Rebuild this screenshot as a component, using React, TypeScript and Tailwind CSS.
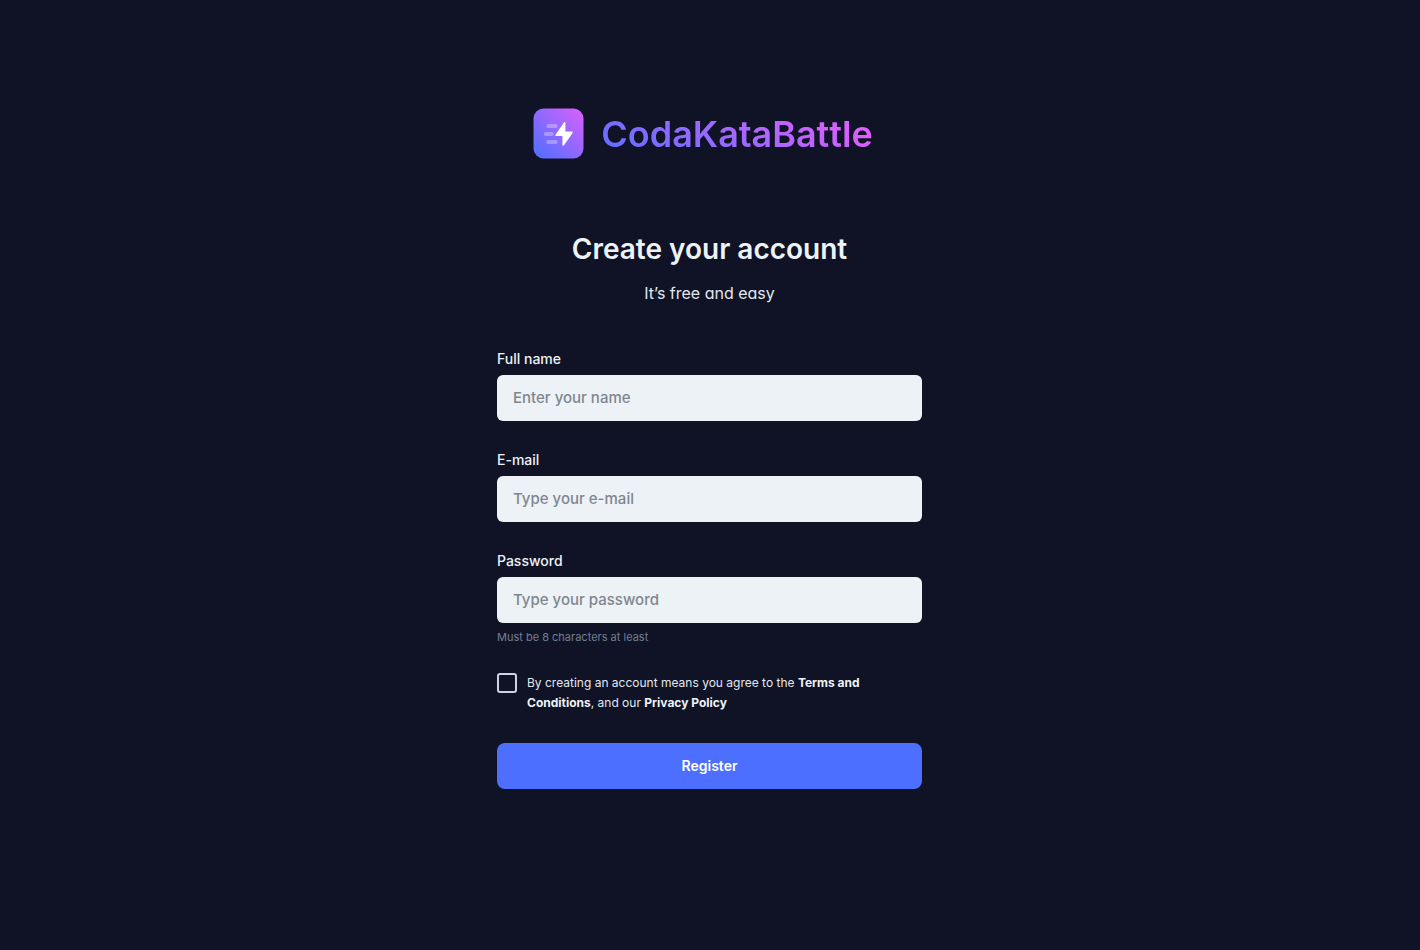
import { useId } from "react";

function LogoMark() {
  return (
    <svg width="52" height="52" viewBox="0 0 52 52" fill="none" aria-hidden="true">
      <defs>
        <linearGradient id="mark" x1="1" y1="51" x2="51" y2="1" gradientUnits="userSpaceOnUse">
          <stop stopColor="#4C6FFF" />
          <stop offset="0.5" stopColor="#9069FF" />
          <stop offset="1" stopColor="#DD5FFF" />
        </linearGradient>
      </defs>
      <rect x="1.5" y="1.5" width="50" height="50" rx="10" fill="url(#mark)" />
      <g fill="#fff" fillOpacity="0.3">
        <rect x="14.5" y="17" width="11" height="4" rx="1.6" />
        <rect x="12" y="25" width="9.5" height="4" rx="1.6" />
        <rect x="14.5" y="33" width="11" height="4" rx="1.6" />
      </g>
      <path
        d="M32 15.6 L23.4 27.8 Q22.8 29 24 29 H30.4 V38 Q30.6 39.4 31.8 38.4 L40.6 26 Q41.2 24.6 40 24.6 H33.4 V16 Q33.1 14.4 32 15.6 Z"
        fill="#fff"
      />
    </svg>
  );
}

type FieldProps = {
  label: string;
  placeholder: string;
  type: string;
  hint?: string;
};

function Field({ label, placeholder, type, hint }: FieldProps) {
  const id = useId();
  return (
    <div className="flex flex-col">
      <label htmlFor={id} className="mb-1.5 text-sm leading-5 font-medium">
        {label}
      </label>
      <input
        id={id}
        type={type}
        placeholder={placeholder}
        aria-describedby={hint ? `${id}-hint` : undefined}
        className="h-[46px] w-full rounded-md bg-[#edf2f7] px-4 pb-px text-[15px] font-medium text-[#101225] outline-none placeholder:text-[#7f868e] focus:ring-2 focus:ring-[#4c6fff]"
      />
      {hint && (
        <p id={`${id}-hint`} className="mt-1.5 text-[11px] leading-4 text-[#718096]">
          {hint}
        </p>
      )}
    </div>
  );
}

export default function App() {
  return (
    <main className="flex min-h-screen flex-col items-center bg-[#101225] pt-[107px] pr-[17px] pb-16 pl-4 font-['Inter',sans-serif] text-[#edf2f7]">
      <header className="mr-3.5 flex items-center gap-[17px]">
        <LogoMark />
        <span className="bg-linear-[30deg,#4c6fff_-10%,#9b69ff_45%,#dd5fff_85%] bg-clip-text pt-0.5 text-4xl leading-[50px] font-semibold text-transparent [font-kerning:none] [font-optical-sizing:none]">
          CodaKataBattle
        </span>
      </header>

      <h1 className="mt-[70px] text-[28px] leading-10 font-semibold">Create your account</h1>
      <p className="mt-3 text-base leading-6 text-[#e2e8f0] [font-feature-settings:'cv11']">It’s free and easy</p>

      <form className="mt-11 flex w-full max-w-[425px] flex-col" onSubmit={(e) => e.preventDefault()}>
        <div className="flex flex-col gap-[29px]">
          <Field label="Full name" placeholder="Enter your name" type="text" />
          <Field label="E-mail" placeholder="Type your e-mail" type="email" />
          <Field label="Password" placeholder="Type your password" type="password" hint="Must be 8 characters at least" />
        </div>

        <div className="mt-7 flex items-start gap-2.5">
          <input
            id="terms"
            type="checkbox"
            className="size-5 shrink-0 appearance-none rounded-[3px] border-2 border-[#cbd5e0] checked:bg-[#4c6fff]"
          />
          <label htmlFor="terms" className="max-w-[350px] text-xs leading-5 text-[#e2e8f0]">
            By creating an account means you agree to the{" "}
            <a href="#terms-and-conditions" className="font-bold text-[#edf2f7]">Terms and Conditions</a>, and our{" "}
            <a href="#privacy-policy" className="font-bold text-[#edf2f7]">Privacy Policy</a>
          </label>
        </div>

        <button type="submit" className="mt-[30px] h-[46px] w-full rounded-lg bg-[#4c6fff] text-sm font-semibold text-white">
          Register
        </button>
      </form>
    </main>
  );
}
